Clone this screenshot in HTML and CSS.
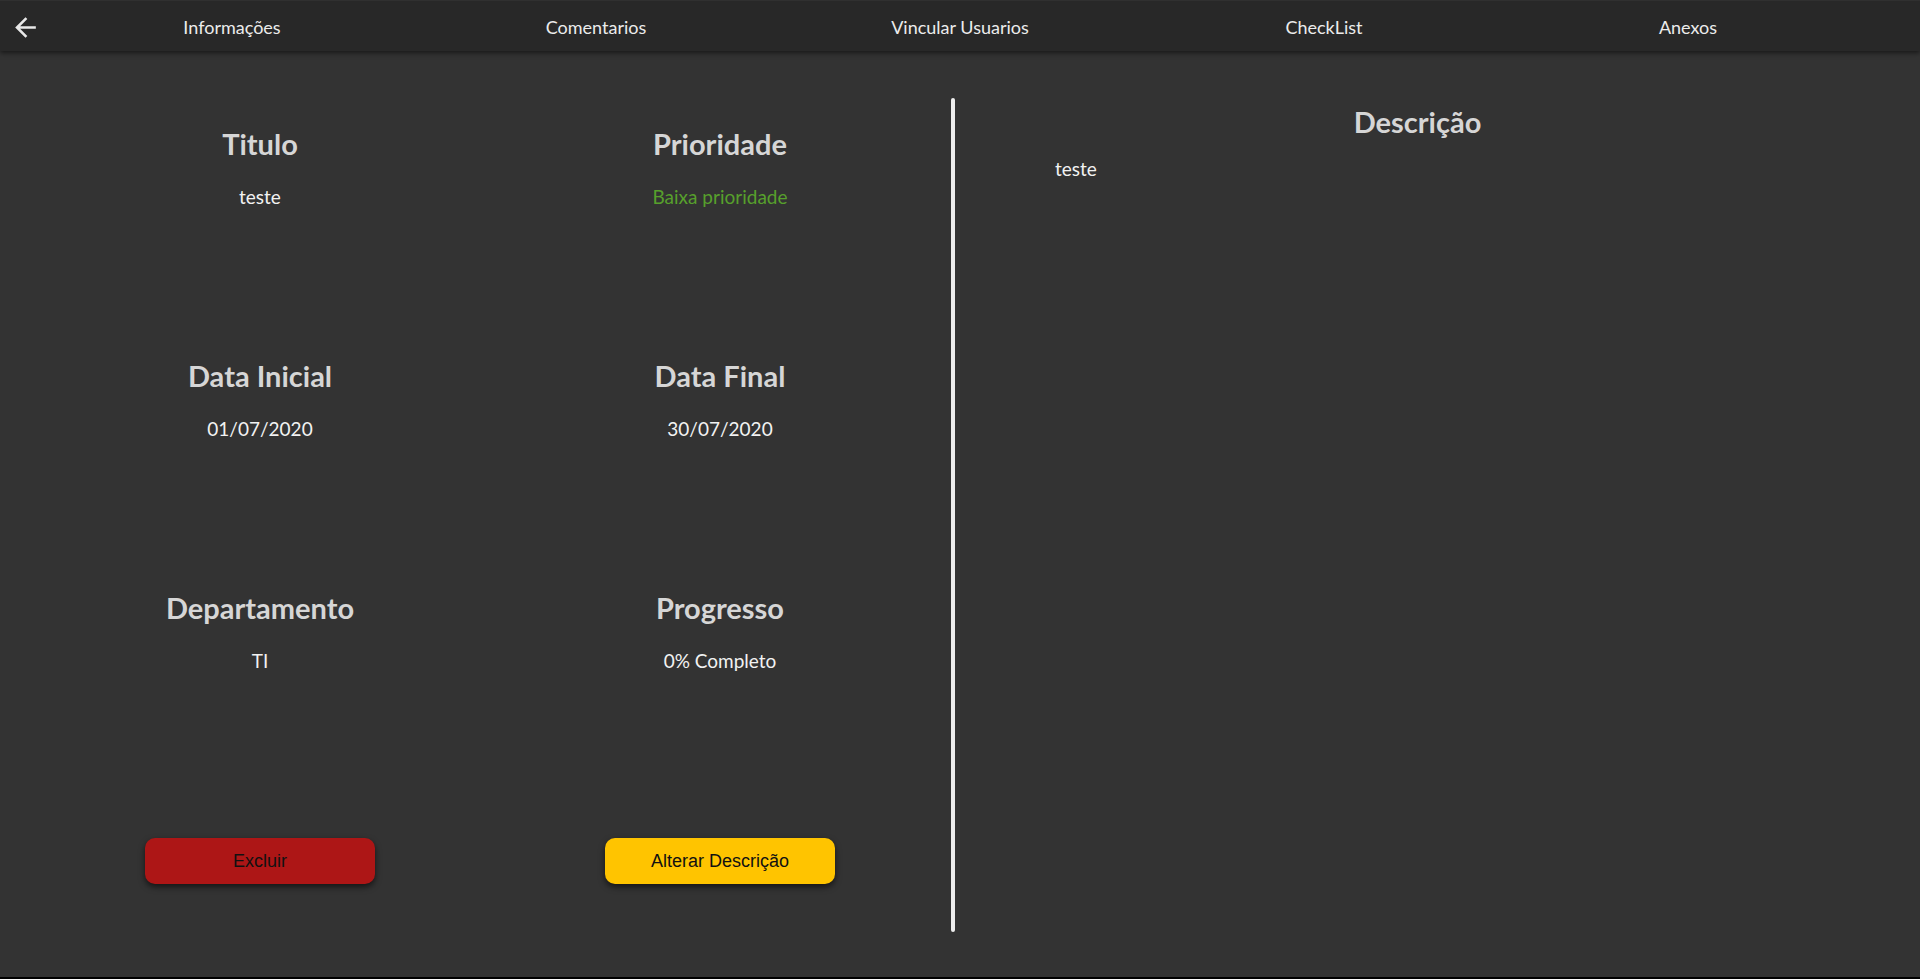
FILE: index.html
```html
<!DOCTYPE html>
<html lang="pt-BR">
<head>
<meta charset="utf-8">
<title>Tarefa</title>
<link rel="stylesheet" href="styles.css">
</head>
<body>
<div class="app">
  <header class="topbar">
    <button class="back" aria-label="Voltar">
      <svg width="31" height="31" viewBox="0 0 24 24"><path d="M20 11H7.83l5.59-5.59L12 4l-8 8 8 8 1.41-1.41L7.83 13H20v-2z" fill="#e8e8e8"/></svg>
    </button>
    <nav class="tabs">
      <a class="tab">Informações</a>
      <a class="tab">Comentarios</a>
      <a class="tab">Vincular Usuarios</a>
      <a class="tab">CheckList</a>
      <a class="tab">Anexos</a>
    </nav>
    <div class="spacer"></div>
  </header>
  <main class="content">
    <section class="info">
      <div class="field">
        <h2 class="label">Titulo</h2>
        <p class="value">teste</p>
      </div>
      <div class="field">
        <h2 class="label">Prioridade</h2>
        <p class="value low">Baixa prioridade</p>
      </div>
      <div class="field">
        <h2 class="label">Data Inicial</h2>
        <p class="value">01/07/2020</p>
      </div>
      <div class="field">
        <h2 class="label">Data Final</h2>
        <p class="value">30/07/2020</p>
      </div>
      <div class="field">
        <h2 class="label">Departamento</h2>
        <p class="value">TI</p>
      </div>
      <div class="field">
        <h2 class="label">Progresso</h2>
        <p class="value">0% Completo</p>
      </div>
      <div class="action">
        <button class="btn btn-danger">Excluir</button>
      </div>
      <div class="action">
        <button class="btn btn-warning">Alterar Descrição</button>
      </div>
    </section>
    <div class="divider"></div>
    <section class="desc">
      <h2 class="label">Descrição</h2>
      <p class="desc-text">teste</p>
    </section>
  </main>
</div>
</body>
</html>
```
FILE: styles.css
```css
* { box-sizing: border-box; }
html, body { margin: 0; padding: 0; }
body {
  background: #000;
  font-family: Lato, "Open Sans", sans-serif;
  color: #f0f0f0;
  overflow: hidden;
}
.app {
  height: 977px;
  background: #333333;
  display: flex;
  flex-direction: column;
}
.topbar {
  height: 51px;
  flex: none;
  display: flex;
  align-items: center;
  background: #282828;
  border-top: 1px solid #303030;
  box-shadow: 0 2px 5px rgba(0,0,0,0.55);
  position: relative;
  z-index: 1;
}
.back {
  width: 50px;
  height: 50px;
  background: none;
  border: 0;
  padding: 0;
  display: flex;
  align-items: center;
  justify-content: flex-start;
  cursor: pointer;
}
.back svg { margin-left: 10px; margin-top: 3px; }
.tabs {
  flex: 1;
  display: flex;
}
.tab {
  flex: 1;
  text-align: center;
  font-size: 18px;
  color: #ececec;
  padding-top: 2px;
}
.spacer { width: 50px; flex: none; }

.content {
  flex: 1;
  display: flex;
  align-items: flex-start;
}
.info {
  width: 920px;
  margin-left: 30px;
  display: grid;
  grid-template-columns: 1fr 1fr;
  grid-template-rows: repeat(3, 232px) auto;
  padding-top: 75px;
}
.field { text-align: center; }
.label {
  margin: 0;
  font-size: 29px;
  line-height: 36px;
  font-weight: 700;
  color: #d6d6d6;
}
.value {
  margin: 23px 0 0;
  font-size: 19px;
  color: #f2f2f2;
}
.value.low { color: #57a02c; }
.action {
  display: flex;
  justify-content: center;
  padding-top: 16px;
}
.btn {
  width: 230px;
  height: 46px;
  border: 0;
  border-radius: 10px;
  font-family: "Liberation Sans", Arial, sans-serif;
  font-size: 18px;
  color: #111;
  box-shadow: 0 3px 6px rgba(0,0,0,0.6);
  cursor: pointer;
}
.btn-danger { background: #ad1616; }
.btn-warning { background: #ffc400; }

.divider {
  width: 4px;
  margin-left: 1px;
  margin-top: 47px;
  height: 834px;
  background: #eeeeee;
  border-radius: 2px;
}
.desc {
  flex: 1;
  margin-right: 40px;
  padding-top: 53px;
}
.desc .label { text-align: center; }
.desc-text {
  margin: 17px 0 0 100px;
  font-size: 19px;
  color: #f2f2f2;
}
```
